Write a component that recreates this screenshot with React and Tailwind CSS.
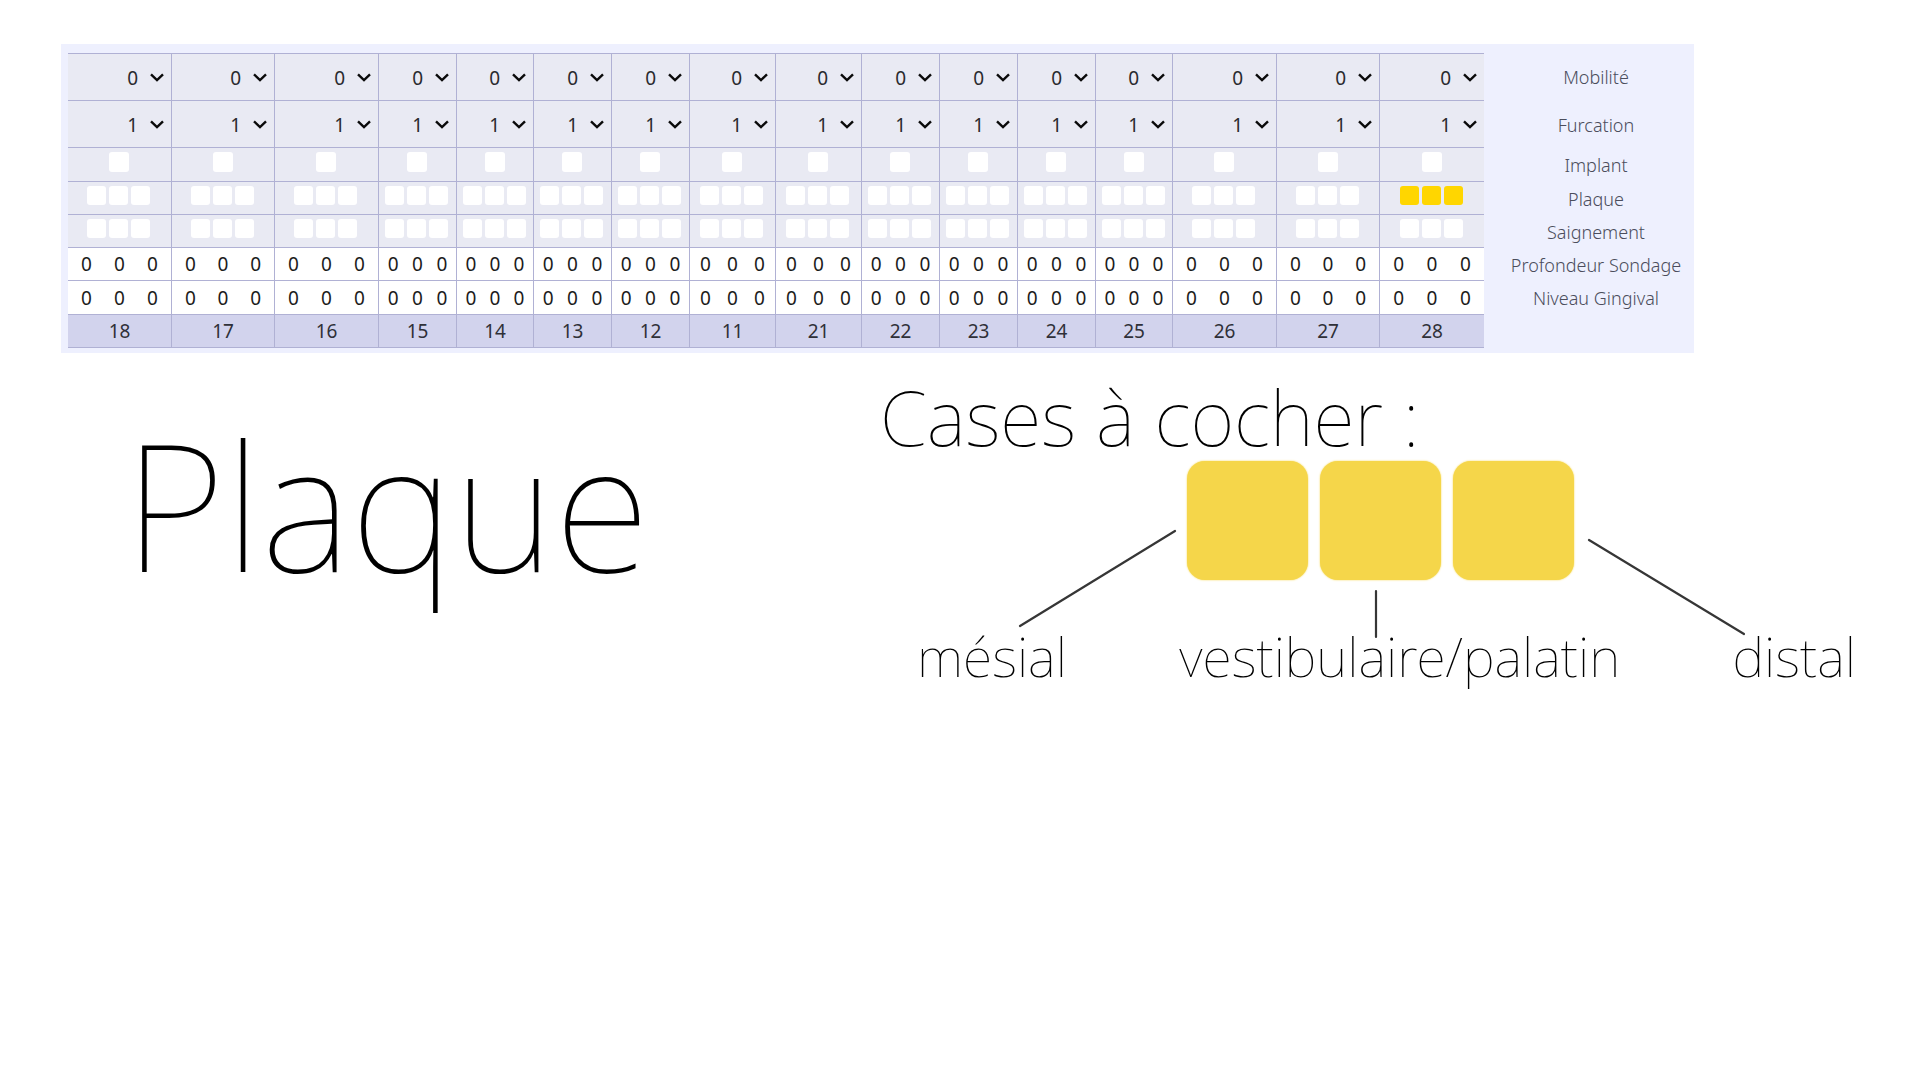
import React from "react";

const WIDE = "w-[104px]";
const NARROW = "w-[78px]";
const FRONT = "w-[86px]";

const teeth = [
  { id: 18, width: WIDE },
  { id: 17, width: "w-[103px]" },
  { id: 16, width: WIDE },
  { id: 15, width: NARROW },
  { id: 14, width: "w-[77px]" },
  { id: 13, width: NARROW },
  { id: 12, width: NARROW },
  { id: 11, width: FRONT },
  { id: 21, width: FRONT },
  { id: 22, width: NARROW },
  { id: 23, width: NARROW },
  { id: 24, width: NARROW },
  { id: 25, width: "w-[77px]" },
  { id: 26, width: WIDE },
  { id: 27, width: "w-[103px]" },
  { id: 28, width: WIDE },
];

const cell = "border-b border-r border-[#b0b1d4] p-0 [&:nth-last-child(2)]:border-r-0";
const sites = [0, 1, 2];

function RowLabel({ children }) {
  return (
    <th scope="row" className="p-0 pl-[14px] text-center align-middle text-[18px] font-light leading-6 text-[#4b4d5c]">
      {children}
    </th>
  );
}

function SelectRow({ label, value, height, first }) {
  return (
    <tr className={height}>
      {teeth.map((t) => (
        <td key={t.id} className={`${cell} bg-[#e9eaf3] ${first ? "border-t" : ""}`}>
          <div className="grid items-center">
            <select
              aria-label={`${label} ${t.id}`}
              defaultValue={value}
              className="col-start-1 row-start-1 h-9 w-full appearance-none bg-transparent pr-[33px] pt-0.5 text-[#2a2a2e] [text-align-last:right]"
            >
              <option>0</option>
              <option>1</option>
              <option>2</option>
              <option>3</option>
            </select>
            <svg
              viewBox="0 0 14 9"
              className="pointer-events-none col-start-1 row-start-1 mr-[7px] h-[9px] w-[14px] justify-self-end"
              fill="none"
              stroke="#0a0a0a"
              strokeWidth="2.4"
            >
              <path d="M1 1.3 7 7l6-5.7" />
            </svg>
          </div>
        </td>
      ))}
      <RowLabel>{label}</RowLabel>
    </tr>
  );
}

function CheckRow({ label, height, count, box, checkedTooth }) {
  return (
    <tr className={height}>
      {teeth.map((t) => (
        <td key={t.id} className={`${cell} bg-[#e9eaf3] align-top`}>
          <div className={`flex justify-center gap-[3px] pt-1 ${count === 1 ? "pr-px" : "pr-0.5"}`}>
            {sites.slice(0, count).map((s) => (
              <input
                key={s}
                type="checkbox"
                aria-label={`${label} ${t.id} ${s + 1}`}
                defaultChecked={t.id === checkedTooth}
                className={`${box} shrink-0 appearance-none rounded-[3px] bg-white checked:bg-[#ffd600]`}
              />
            ))}
          </div>
        </td>
      ))}
      <RowLabel>{label}</RowLabel>
    </tr>
  );
}

function NumberRow({ label, height }) {
  return (
    <tr className={height}>
      {teeth.map((t) => (
        <td key={t.id} className={`${cell} bg-white`}>
          <div className="grid grid-cols-3 px-0.5">
            {sites.map((s) => (
              <input
                key={s}
                type="text"
                aria-label={`${label} ${t.id} ${s + 1}`}
                defaultValue="0"
                className="h-7 w-full min-w-0 bg-transparent text-center text-[#1c1c1c]"
              />
            ))}
          </div>
        </td>
      ))}
      <RowLabel>{label}</RowLabel>
    </tr>
  );
}

function Chart() {
  return (
    <section className="ml-[61px] mr-[226px] bg-[#eef0fe] pb-[5px] pl-[7px] pt-[9px]">
      <table className="w-full table-fixed border-separate border-spacing-0 text-[19px] leading-6">
        <colgroup>
          {teeth.map((t) => (
            <col key={t.id} className={t.width} />
          ))}
          <col className="w-[210px]" />
        </colgroup>
        <tbody>
          <SelectRow label="Mobilité" value="0" height="h-12" first />
          <SelectRow label="Furcation" value="1" height="h-[47px]" />
          <CheckRow label="Implant" height="h-[34px]" count={1} box="size-5" />
          <CheckRow label="Plaque" height="h-[33px]" count={3} box="size-[19px]" checkedTooth={28} />
          <CheckRow label="Saignement" height="h-[33px]" count={3} box="size-[19px]" />
          <NumberRow label="Profondeur Sondage" height="h-[33px]" />
          <NumberRow label="Niveau Gingival" height="h-[34px]" />
          <tr className="h-[33px]">
            {teeth.map((t) => (
              <td key={t.id} className={`${cell} bg-[#d2d3ed] text-center text-[#2f3038]`}>
                {t.id}
              </td>
            ))}
            <td />
          </tr>
        </tbody>
      </table>
    </section>
  );
}

const zones = [
  { id: "mesial", label: "mésial" },
  { id: "vestibulaire", label: "vestibulaire/palatin" },
  { id: "distal", label: "distal" },
];

function Legend() {
  return (
    <section className="relative w-[976px] shrink-0 pt-5">
      <h2 className="text-[76px] leading-[88px]">Cases à cocher :</h2>
      <div className="flex gap-3 pl-[307px]">
        {zones.map((z) => (
          <input
            key={z.id}
            id={z.id}
            type="checkbox"
            defaultChecked
            className="h-[119px] w-[121px] appearance-none rounded-[18px] bg-[#f5d64a] shadow-[0_0_2px_#f5d64a]"
          />
        ))}
      </div>
      <div className="flex justify-between pl-[37px] pt-10 text-[54px] leading-[72px]">
        {zones.map((z) => (
          <label key={z.id} htmlFor={z.id}>
            {z.label}
          </label>
        ))}
      </div>
      <svg
        viewBox="880 353 974 350"
        className="pointer-events-none absolute left-0 top-0 h-[350px] w-[974px]"
        stroke="#363636"
        strokeWidth="2.2"
        strokeLinecap="round"
      >
        <path d="M1175 531 1020 626M1376 591v46M1589 540l155 94" />
      </svg>
    </section>
  );
}

export default function App() {
  return (
    <main className="min-h-screen bg-white pt-11 font-['Noto_Sans','Open_Sans',sans-serif] text-black">
      <Chart />
      <div className="flex items-start justify-between pl-[124px] pr-16 font-thin">
        <h1 className="pt-[31px] text-[176px] leading-[240px]">Plaque</h1>
        <Legend />
      </div>
    </main>
  );
}
